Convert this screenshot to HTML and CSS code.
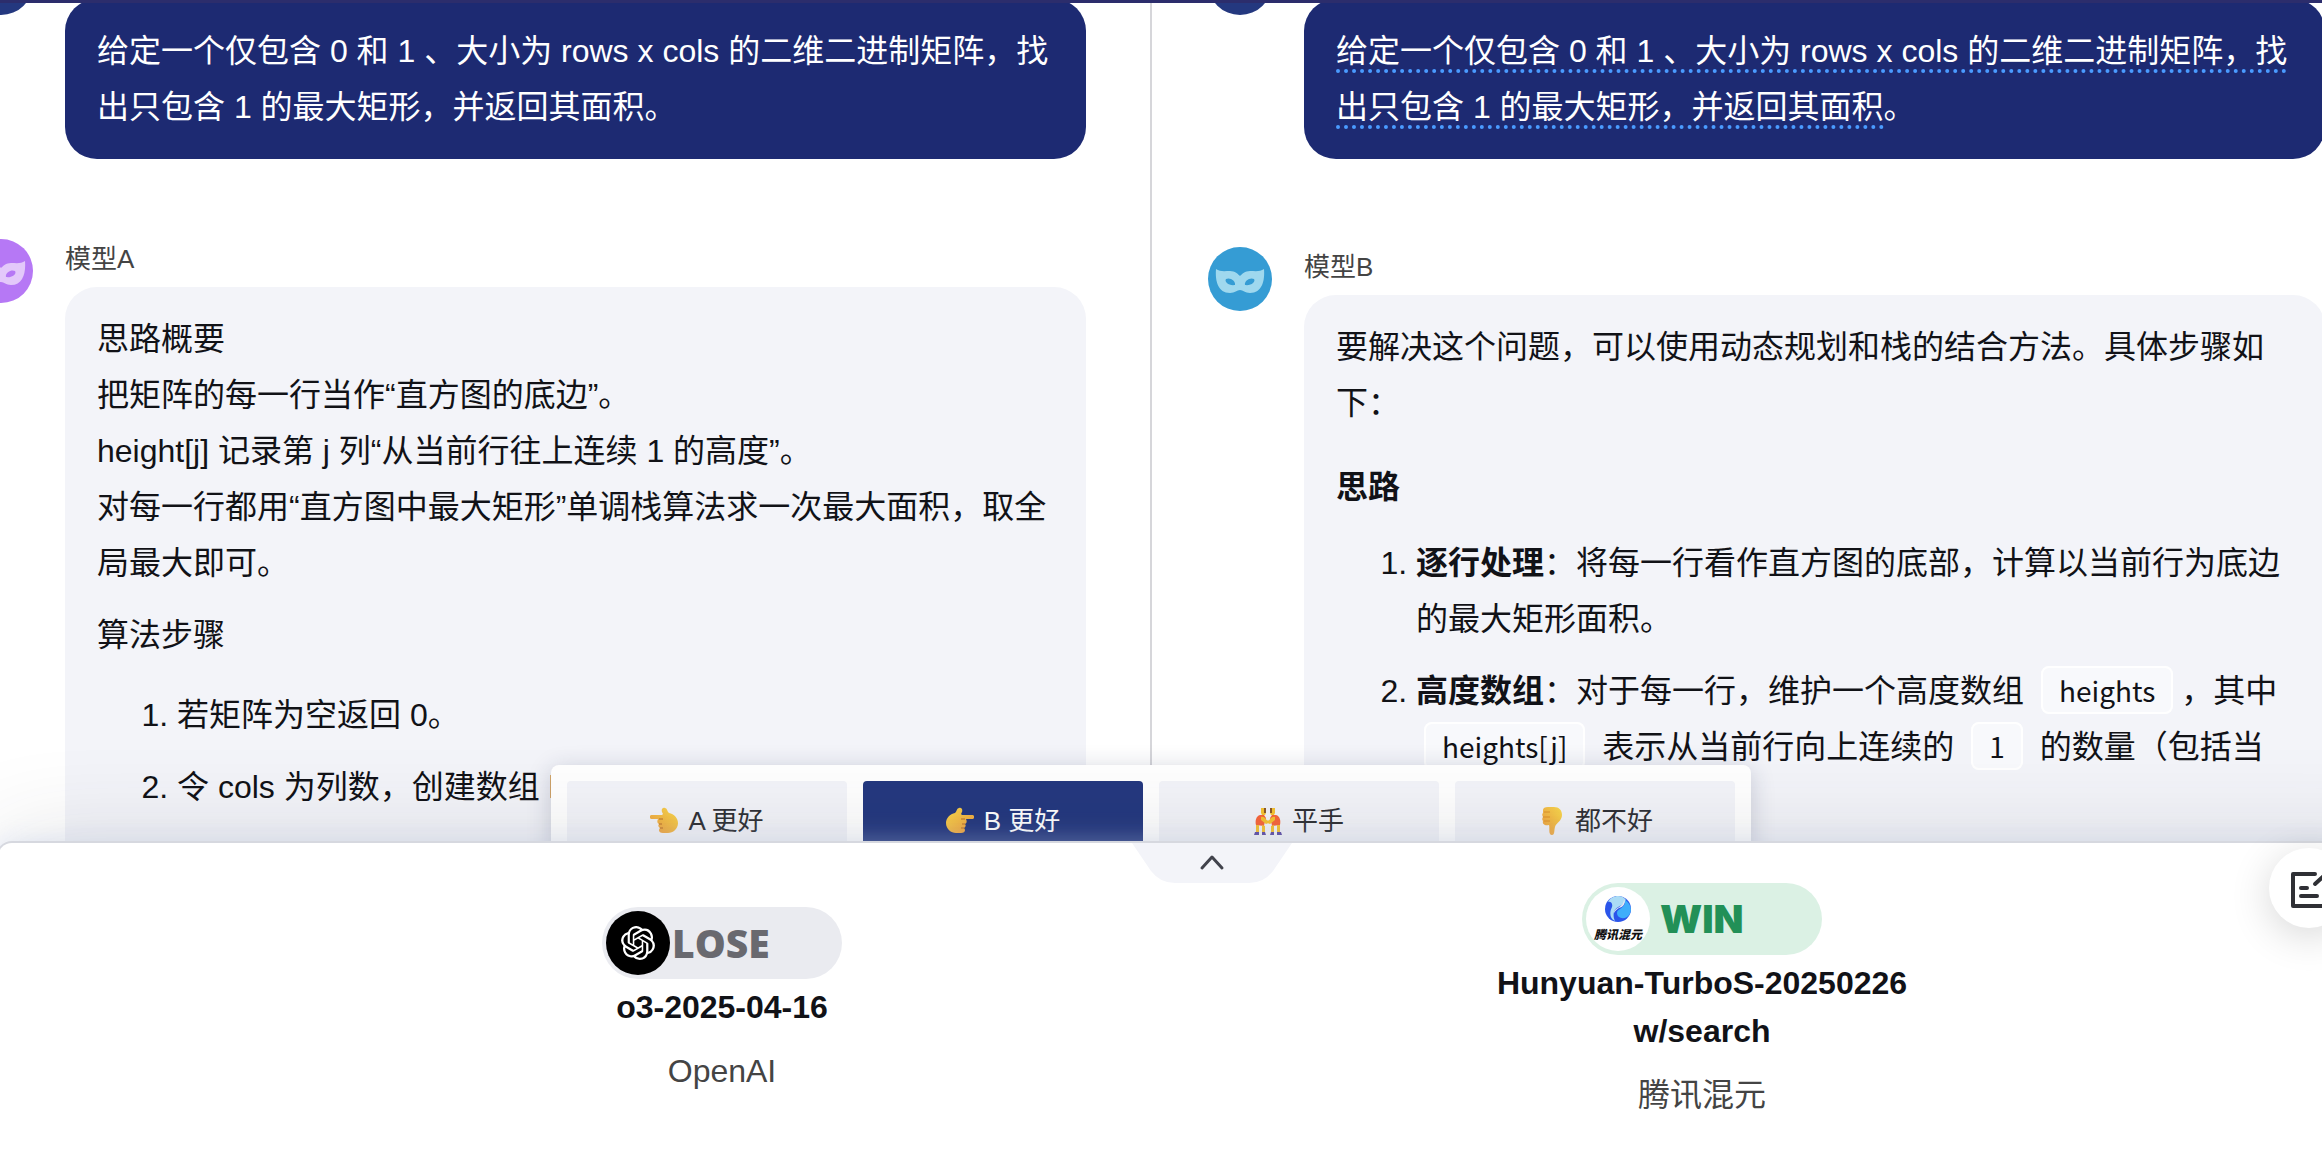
FILE: index.html
```html
<!DOCTYPE html>
<html lang="zh-CN">
<head>
  <meta charset="UTF-8" />
  <meta name="viewport" content="width=device-width, initial-scale=1.0"/>
  <title>模型对战</title>
  <link rel="stylesheet" href="styles.css">
</head>
<body>
  <header class="topbar"></header>
  <main class="chat">
    <div class="columns">
      <section class="column column-a">
        <div class="message user">
          <div class="avatar"></div>
          <div class="body">
            <div class="name"></div>
            <div class="bubble"><p>给定一个仅包含 0 和 1 、大小为 rows x cols 的二维二进制矩阵，找出只包含 1 的最大矩形，并返回其面积。</p></div>
          </div>
        </div>
        <div class="message">
          <div class="avatar purple">
            <svg viewBox="0 0 64 64"><path fill-rule="evenodd" d="M8 22c4 3 9 2 14 2 5 0 8 3 10 5 2-2 5-5 10-5 5 0 10 1 14-2 1 12-2 24-14 24-5 0-7-3-10-3s-5 3-10 3C10 46 7 34 8 22zM18 32c-2 3 3 7 9 6 1-4-5-8-9-6zm28 0c2 3-3 7-9 6-1-4 5-8 9-6z"/></svg>
          </div>
          <div class="body">
            <div class="name">模型A</div>
            <div class="bubble">
              <p>思路概要<br>把矩阵的每一行当作“直方图的底边”。<br>height[j] 记录第 j 列“从当前行往上连续 1 的高度”。<br>对每一行都用“直方图中最大矩形”单调栈算法求一次最大面积，取全局最大即可。</p>
              <p>算法步骤</p>
              <ol>
                <li>若矩阵为空返回 0。</li>
                <li>令 cols 为列数，创建数组 heights。</li>
              </ol>
            </div>
          </div>
        </div>
      </section>
      <section class="column column-b">
        <div class="message user">
          <div class="avatar"></div>
          <div class="body">
            <div class="name"></div>
            <div class="bubble"><p><span class="marked">给定一个仅包含 0 和 1 、大小为 rows x cols 的二维二进制矩阵，找出只包含 1 的最大矩形，并返回其面积</span>。</p></div>
          </div>
        </div>
        <div class="message">
          <div class="avatar blue">
            <svg viewBox="0 0 64 64"><path fill-rule="evenodd" d="M8 22c4 3 9 2 14 2 5 0 8 3 10 5 2-2 5-5 10-5 5 0 10 1 14-2 1 12-2 24-14 24-5 0-7-3-10-3s-5 3-10 3C10 46 7 34 8 22zM18 32c-2 3 3 7 9 6 1-4-5-8-9-6zm28 0c2 3-3 7-9 6-1-4 5-8 9-6z"/></svg>
          </div>
          <div class="body">
            <div class="name">模型B</div>
            <div class="bubble">
              <p>要解决这个问题，可以使用动态规划和栈的结合方法。具体步骤如下：</p>
              <h3>思路</h3>
              <ol>
                <li><strong>逐行处理</strong>：将每一行看作直方图的底部，计算以当前行为底边的最大矩形面积。</li>
                <li><strong>高度数组</strong>：对于每一行，维护一个高度数组 <code>heights</code>，其中 <code>heights[j]</code> 表示从当前行向上连续的 <code>1</code> 的数量（包括当前行）。</li>
              </ol>
            </div>
          </div>
        </div>
      </section>
    </div>
    <div class="vote-wrap">
      <div class="vote">
        <button type="button">
          <svg class="emoji" viewBox="0 0 28 28"><use href="#hand"/></svg>A 更好
        </button>
        <button type="button" class="active">
          <svg class="emoji flip" viewBox="0 0 28 28"><use href="#hand"/></svg>B 更好
        </button>
        <button type="button">
          <svg class="emoji" viewBox="0 0 28 28">
            <g id="wrestler">
              <path fill="#f7c331" d="M7 1h5v5l-1 2H8L7 6z"/>
              <path fill="#8a5a2a" d="M10 1h2v5h-2z"/>
              <path fill="#f9653a" d="M6 8c-4 1-5 6-4 10l8 1c0-3 2-5 2-8L10 8z"/>
              <path fill="#f7c331" d="M7 10c2-1 5 1 6 4l3-1 1 2-5 2-5-4zM2 18h3v7H2zm6 0 3 1v6H8z"/>
              <path fill="#5b4aa5" d="M1 25h4v3H0zm7 0h3l1 3H8z"/>
            </g>
            <use href="#wrestler" transform="matrix(-1 0 0 1 28 0)"/>
          </svg>平手
        </button>
        <button type="button">
          <svg class="emoji" viewBox="0 0 28 28">
            <path fill="url(#skin)" d="M6 3c0-2 2-3 5-3h6c5 0 8 3 8 8 0 6-6 8-7 12-1 3 0 8-3 8-4 0-2-7-3-10-4 1-7-1-6-4-1-1-1-3 0-4-1-2-1-3 0-4z"/>
            <path fill="none" stroke="#df922a" d="M7 5h6M6 10h7M7 14h6"/>
          </svg>都不好
        </button>
      </div>
    </div>
  </main>

  <footer class="drawer">
    <button type="button" class="handle" aria-label="收起">
      <svg class="tab" viewBox="0 0 160 40"><path fill="#f3f4f9" d="M0 0h160l-19 28q-9 12-24 12H43q-15 0-24-12z"/><path fill="none" stroke="#41434c" stroke-width="3" stroke-linecap="round" stroke-linejoin="round" d="m70 25 10-11 10 11"/></svg>
    </button>
    <div class="results">
      <div class="result">
        <div class="pill lose">
          <span class="logo dark">
            <svg viewBox="0 0 24 24"><path fill="#fff" d="M22.2819 9.8211a5.9847 5.9847 0 0 0-.5157-4.9108 6.0462 6.0462 0 0 0-6.5098-2.9A6.0651 6.0651 0 0 0 4.9807 4.1818a5.9847 5.9847 0 0 0-3.9977 2.9 6.0462 6.0462 0 0 0 .7427 7.0966 5.98 5.98 0 0 0 .511 4.9107 6.051 6.051 0 0 0 6.5146 2.9001A5.9847 5.9847 0 0 0 13.2599 24a6.0557 6.0557 0 0 0 5.7718-4.2058 5.9894 5.9894 0 0 0 3.9977-2.9001 6.0557 6.0557 0 0 0-.7475-7.0729zm-9.022 12.6081a4.4755 4.4755 0 0 1-2.8764-1.0408l.1419-.0804 4.7783-2.7582a.7948.7948 0 0 0 .3927-.6813v-6.7369l2.02 1.1686a.071.071 0 0 1 .038.052v5.5826a4.504 4.504 0 0 1-4.4945 4.4944zm-9.6607-4.1254a4.4708 4.4708 0 0 1-.5346-3.0137l.142.0852 4.783 2.7582a.7712.7712 0 0 0 .7806 0l5.8428-3.3685v2.3324a.0804.0804 0 0 1-.0332.0615L9.74 19.9502a4.4992 4.4992 0 0 1-6.1408-1.6464zM2.3408 7.8956a4.485 4.485 0 0 1 2.3655-1.9728V11.6a.7664.7664 0 0 0 .3879.6765l5.8144 3.3543-2.0201 1.1685a.0757.0757 0 0 1-.071 0l-4.8303-2.7865A4.504 4.504 0 0 1 2.3408 7.872zm16.5963 3.8558L13.1038 8.364 15.1192 7.2a.0757.0757 0 0 1 .071 0l4.8303 2.7913a4.4944 4.4944 0 0 1-.6765 8.1042v-5.6772a.79.79 0 0 0-.407-.667zm2.0107-3.0231l-.142-.0852-4.7735-2.7818a.7759.7759 0 0 0-.7854 0L9.409 9.2297V6.8974a.0662.0662 0 0 1 .0284-.0615l4.8303-2.7866a4.4992 4.4992 0 0 1 6.6802 4.66zM8.3065 12.863l-2.02-1.1638a.0804.0804 0 0 1-.038-.0567V6.0742a4.4992 4.4992 0 0 1 7.3757-3.4537l-.142.0805L8.704 5.459a.7948.7948 0 0 0-.3927.6813zm1.0976-2.3654l2.602-1.4998 2.6069 1.4998v2.9994l-2.5974 1.4997-2.6067-1.4997Z"/></svg>
          </span>
          <span>LOSE</span>
        </div>
        <div class="model">o3-2025-04-16</div>
        <div class="vendor">OpenAI</div>
      </div>
      <div class="result">
        <div class="pill win">
          <span class="logo light">
            <svg viewBox="0 0 26 26">
              <circle cx="13" cy="13" r="13" fill="#2b55ea"/>
              <path fill="#abdcf5" d="M3 6C7-1 17-2 21 4c-2 7-10 5-12 12-1 4 0 7 1 9-5-2-6-8-3-14 1-3-1-6-4-5z"/>
              <path fill="#3eaefa" d="M20 4c7 4 8 13 2 17-5 3-10 0-10-4 0-5 9-4 8-13z"/>
              <path fill="#e7eaf2" d="M19 3c2 5-1 8-5 9-2 1-4 3-5 5 0-6 10-5 10-14z"/>
            </svg>
            <small>腾讯混元</small>
          </span>
          <span>WIN</span>
        </div>
        <div class="model">Hunyuan-TurboS-20250226<br>w/search</div>
        <div class="vendor">腾讯混元</div>
      </div>
    </div>
  </footer>

  <button type="button" class="feedback" aria-label="反馈">
    <svg viewBox="0 0 40 40" fill="none" stroke="#2f3035" stroke-width="4" stroke-linecap="round" stroke-linejoin="round"><path d="M24 4H2v32h34V18M10 18h6M10 26h16M24 14 36 3"/></svg>
  </button>

  <!-- shared shapes -->
  <svg class="defs" width="0" height="0">
    <defs>
      <linearGradient id="skin" x1="0" y1="1" x2="1" y2="0">
        <stop offset="0" stop-color="#ee9a3f"/>
        <stop offset="1" stop-color="#fadb4c"/>
      </linearGradient>
      <g id="hand">
        <path fill="url(#skin)" d="M12 5c-1-3 1-5 3-4 2 0 2 3 4 5 5 1 9 5 9 10 0 6-5 10-10 10h-5c-4 0-5-3-3-5-2-1-2-3-1-4-2-1-2-3-1-5H2c-3 0-3-4 0-4h10l1-1z"/>
        <path fill="none" stroke="#b9702a" d="M9 12h4M9 17h3M10 21h3"/>
      </g>
    </defs>
  </svg>
</body>
</html>
```
FILE: styles.css
```css
* {
  box-sizing: border-box;
}
body {
  margin: 0;
  height: 100vh;
  display: flex;
  flex-direction: column;
  overflow: hidden;
  background: #fff;
  color: #111217;
  font-family: "Liberation Sans", "Noto Sans CJK SC", sans-serif;
  font-size: 32px;
  line-height: 56px;
}
button {
  border: 0;
  padding: 0;
  font: inherit;
  color: inherit;
  cursor: pointer;
}
p, h3, ol {
  margin: 0;
}
.topbar {
  height: 3px;
  flex: none;
  background: #2c2d6c;
  position: relative;
  z-index: 3;
}

/* chat area */
.chat {
  flex: 1;
  min-height: 0;
  position: relative;
  overflow: hidden;
}
.columns {
  display: grid;
  grid-template-columns: 1fr 1fr;
  margin: -52px -69px 0 -87px;
}
.column {
  display: flex;
  flex-direction: column;
  gap: 80px;
  padding: 0 66px 0 56px;
}
.column-a {
  border-right: 2px solid #d6d6da;
  padding-right: 64px;
}
.column-b {
  gap: 88px;
}
.message {
  display: flex;
  gap: 32px;
}
.avatar {
  width: 64px;
  height: 64px;
  flex: none;
  border-radius: 50%;
  background: #24387f;
}
.avatar svg {
  display: block;
}
.avatar.purple {
  background: #b678f5;
}
.avatar.purple path {
  fill: #e3c8fa;
}
.avatar.blue {
  background: #359cd4;
}
.avatar.blue path {
  fill: #9fd8ee;
}
.body {
  flex: 1;
}
.name {
  height: 48px;
  font-size: 26px;
  line-height: 40px;
  color: #444;
}
.bubble {
  background: #f3f4f9;
  border-radius: 32px;
  padding: 24px 32px;
}
.message:last-child .bubble {
  padding-bottom: 80px;
}
.user .bubble {
  background: #1d2a72;
  color: #fff;
}
.marked {
  border-bottom: 4px dotted #4a9bff;
}
.bubble p + p {
  margin-top: 16px;
}
.bubble h3 {
  font-size: 32px;
  margin: 28px 0 20px;
}
.bubble ol {
  padding-left: 80px;
}
.bubble p + ol {
  margin-top: 24px;
}
.bubble li + li {
  margin-top: 16px;
}
code {
  margin: 0 8px;
  padding: 2px 16px;
  border: 2px solid #fff;
  border-radius: 8px;
  background: #f8f9fc;
  font-family: "Noto Sans CJK SC", sans-serif;
  font-size: 28px;
  line-height: 40px;
}

/* vote buttons */
.vote-wrap {
  position: absolute;
  left: -89px;
  right: -69px;
  bottom: -36px;
  display: flex;
  justify-content: center;
}
.vote {
  display: grid;
  grid-template-columns: repeat(4, 280px);
  gap: 16px;
  padding: 16px;
  background: #fff;
  border-radius: 8px;
  box-shadow: 0 4px 24px rgba(30, 40, 80, 0.2);
}
.vote button {
  height: 80px;
  display: flex;
  align-items: center;
  justify-content: center;
  gap: 10px;
  border-radius: 4px;
  background: #f3f4f9;
  color: #2f3035;
  font-size: 26px;
  line-height: 40px;
}
.vote .active {
  background: #24387f;
  color: #fff;
}
.emoji {
  width: 28px;
  height: 28px;
}
.flip {
  transform: scaleX(-1);
}

/* result drawer */
.drawer {
  flex: none;
  position: relative;
  z-index: 1;
  margin: 0 -106px 0 -4px;
  padding: 40px 234px 45px;
  background: #fff;
  border: 2px solid #d6d8df;
  border-bottom: 0;
  border-radius: 16px 16px 0 0;
  box-shadow: 0 0 100px rgba(50, 50, 60, 0.14), 0 0 24px rgba(200, 215, 245, 0.4);
}
.handle {
  position: absolute;
  top: 0;
  left: 50%;
  margin-left: -80px;
  width: 160px;
  height: 40px;
  background: none;
}
.tab {
  display: block;
}
.results {
  display: grid;
  grid-template-columns: 1fr 1fr;
  align-items: center;
}
.result {
  display: flex;
  flex-direction: column;
  align-items: center;
  text-align: center;
  line-height: 48px;
}
.pill {
  width: 240px;
  height: 72px;
  padding: 4px;
  margin-bottom: 4px;
  border-radius: 36px;
  display: flex;
  align-items: center;
  gap: 2px;
  font-size: 39px;
  font-weight: 900;
}
.lose {
  background: #eaebf0;
  color: #69696f;
  font-family: "Open Sans", sans-serif;
}
.win {
  gap: 10px;
  background: #dbf1e4;
  color: #229057;
  font-family: Inter, sans-serif;
}
.logo {
  width: 64px;
  height: 64px;
  border-radius: 50%;
  display: flex;
  flex-direction: column;
  align-items: center;
  justify-content: center;
}
.logo.dark {
  background: #000;
}
.dark svg {
  width: 34px;
}
.logo.light {
  background: #fff;
  gap: 4px;
}
.light svg {
  width: 26px;
}
.light small {
  font-family: "Noto Sans CJK SC", sans-serif;
  font-size: 12px;
  font-style: italic;
  line-height: 16px;
  color: #111;
}
.model {
  font-weight: bold;
}
.vendor {
  margin-top: 16px;
  color: #444;
}

.feedback {
  position: fixed;
  right: -27px;
  bottom: 236px;
  z-index: 2;
  width: 80px;
  height: 80px;
  padding: 4px 0 0 4px;
  border-radius: 50%;
  background: #fff;
  box-shadow: 0 8px 40px rgba(0, 0, 0, 0.16);
}
.feedback svg {
  display: block;
  width: 40px;
  height: 40px;
  margin: 0 auto;
}
.defs {
  position: absolute;
}
```
